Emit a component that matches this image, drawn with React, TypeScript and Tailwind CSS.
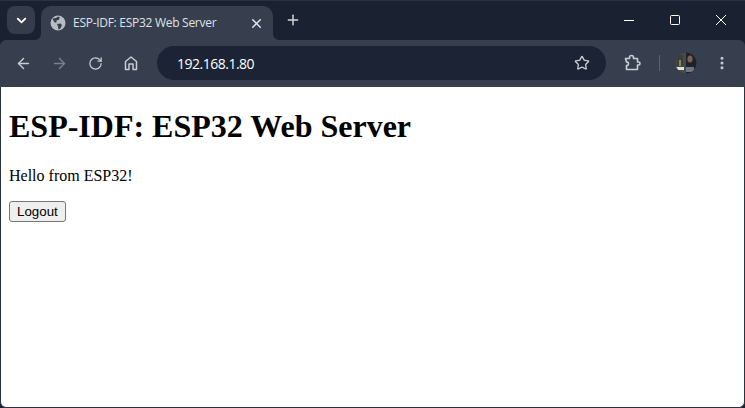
import { ArrowLeft, ArrowRight, ChevronDown, MoreVertical, Plus, RotateCw, Star, X } from "lucide-react";

// little photo stand-in for the profile button
const Avatar = () => (
  <svg width="22" height="22" viewBox="0 0 22 22" className="shrink-0">
    <defs>
      <clipPath id="avatar-clip">
        <circle cx="11" cy="11" r="10.5" />
      </clipPath>
    </defs>
    <g clipPath="url(#avatar-clip)">
      <rect width="22" height="22" fill="#474a4c" />
      <rect x="2" y="3" width="6" height="11" fill="#3a3d38" />
      <rect x="4" y="8" width="2" height="6" fill="#8a8a55" />
      <rect x="11" y="0" width="11" height="22" fill="#1f2129" />
      <ellipse cx="15" cy="7" rx="2.6" ry="3.6" fill="#7a5f52" />
      <rect x="1" y="15" width="8" height="3" fill="#dfe3dc" />
      <rect x="11" y="15" width="8" height="5" fill="#6b7480" />
    </g>
  </svg>
);

const GlobeFilled = () => (
  <svg width="16" height="16" viewBox="0 0 16 16" className="shrink-0">
    <circle cx="8" cy="8" r="7.5" fill="#b8bcc4" />
    <path d="M2.5 3.5 L6 3 L8 1.5 L10 2.5 L8.5 5 L6.5 5.5 L6.5 7.5 L4.5 7.5 Z" fill="#373f4f" />
    <path d="M7 9 L10.5 8.5 L12 10 L10.5 13.5 L8.5 14.5 L8 11.5 Z" fill="#373f4f" />
  </svg>
);

const HomeIcon = () => (
  <svg width="16" height="16" viewBox="0 0 16 16" fill="none" stroke="#c8ccd3" strokeWidth="1.5" strokeLinejoin="round">
    <path d="M2.5 14.5 V6.5 L8 2 L13.5 6.5 V14.5 H10 V9 H6 V14.5 Z" />
  </svg>
);

const PuzzleIcon = () => (
  <svg width="18" height="18" viewBox="0 0 18 18" fill="none" stroke="#c8ccd3" strokeWidth="1.6" strokeLinejoin="round">
    <path d="M2.5 4.5 H6.5 V3.5 A2 2 0 0 1 10.5 3.5 V4.5 H14.5 V8 H15.5 A1.5 1.5 0 0 1 15.5 11 H14.5 V15.5 H3.5 V11.5 H4.5 A2 2 0 0 0 4.5 8 H3.5 Z" />
  </svg>
);

const ToolbarButton = ({ children, className = "" }: { children: React.ReactNode; className?: string }) => (
  <div className={`flex items-center justify-center w-9 h-9 shrink-0 ${className}`}>{children}</div>
);

export default function App() {
  return (
    <div className="w-[745px] h-[408px] flex flex-col bg-[#1a2232] overflow-hidden font-['Open_Sans',sans-serif]">
      {/* Tab strip */}
      <div className="h-10 flex items-end shrink-0 pl-[7px] border-t border-[#2a3140]">
        <div className="w-7 h-7 mb-[6px] rounded-lg bg-[#353d4c] flex items-center justify-center">
          <ChevronDown size={15} strokeWidth={3} className="text-white" />
        </div>
        <div className="relative ml-[6px] w-[232px] h-[34px] bg-[#373f4f] rounded-t-[10px] flex items-center pl-[9px] pr-[9px]">
          {/* flares where the tab runs into the toolbar */}
          <svg width="6" height="6" viewBox="0 0 6 6" className="absolute left-[-6px] bottom-0">
            <path d="M6 0 V6 H0 A6 6 0 0 0 6 0 Z" fill="#373f4f" />
          </svg>
          <svg width="6" height="6" viewBox="0 0 6 6" className="absolute right-[-6px] bottom-0">
            <path d="M0 0 V6 H6 A6 6 0 0 1 0 0 Z" fill="#373f4f" />
          </svg>
          <GlobeFilled />
          <span className="ml-[7px] text-[12px] leading-none text-[#dfe2e7] flex-1 tracking-[-0.28px]">ESP-IDF: ESP32 Web Server</span>
          <X size={15} strokeWidth={2.4} className="text-[#e6e8ec]" />
        </div>
        <div className="ml-[12px] mb-[12px] w-4 flex items-center justify-center">
          <Plus size={16} strokeWidth={2.2} className="text-[#d5d8de]" />
        </div>
        {/* window controls */}
        <div className="ml-auto flex items-center h-[38px] self-start text-white pr-px">
          <div className="w-[46px] flex justify-center">
            <svg width="12" height="12" viewBox="0 0 12 12"><path d="M1 6.5 H11" stroke="#fff" strokeWidth="1" /></svg>
          </div>
          <div className="w-[46px] flex justify-center">
            <svg width="12" height="12" viewBox="0 0 12 12"><rect x="1.5" y="1.5" width="9" height="9" rx="1" fill="none" stroke="#fff" strokeWidth="1" /></svg>
          </div>
          <div className="w-[46px] flex justify-center">
            <svg width="12" height="12" viewBox="0 0 12 12"><path d="M1 1 L11 11 M11 1 L1 11" stroke="#fff" strokeWidth="1" /></svg>
          </div>
        </div>
      </div>

      {/* Toolbar */}
      <div className="h-[47px] shrink-0 bg-[#373f4f] rounded-t-[6px] flex items-center pl-[5px] pr-[5px] pb-[1px]">
        <ToolbarButton><ArrowLeft size={17} strokeWidth={2} className="text-[#c8ccd3]" /></ToolbarButton>
        <ToolbarButton><ArrowRight size={17} strokeWidth={2} className="text-[#7a808c]" /></ToolbarButton>
        <ToolbarButton><RotateCw size={15} strokeWidth={2} className="text-[#c8ccd3]" /></ToolbarButton>
        <ToolbarButton><HomeIcon /></ToolbarButton>
        <div className="ml-[8px] w-[449px] h-[34px] rounded-full bg-[#1b2334] flex items-center pl-[20px] pr-[16px]">
          <span className="text-[14px] text-white flex-1 tracking-[-0.5px]">192.168.1.80</span>
          <Star size={16} strokeWidth={2} className="text-[#c8ccd3]" />
        </div>
        <ToolbarButton className="ml-[8px]"><PuzzleIcon /></ToolbarButton>
        <div className="ml-[9px] w-px h-4 bg-[#5a6270]" />
        <div className="ml-[15px]"><Avatar /></div>
        <div className="ml-[17px] flex justify-center">
          <MoreVertical size={16} strokeWidth={2.5} className="text-[#c8ccd3]" />
        </div>
      </div>

      {/* Page */}
      <div className="flex-1 bg-white border-x border-b border-[#2a3140] rounded-b-[6px] pl-2 font-['Liberation_Serif',serif] text-black">
        <h1 className="mt-[21px] text-[32px] leading-[37px] font-bold">ESP-IDF: ESP32 Web Server</h1>
        <p className="mt-[22px] text-[16px] leading-[18px]">Hello from ESP32!</p>
        <button className="mt-[16px] block h-[21px] px-[7px] text-[13.33px] leading-none font-['Liberation_Sans',sans-serif] bg-[#efefef] border border-[#767676] rounded-[3px]">Logout</button>
      </div>
    </div>
  );
}
